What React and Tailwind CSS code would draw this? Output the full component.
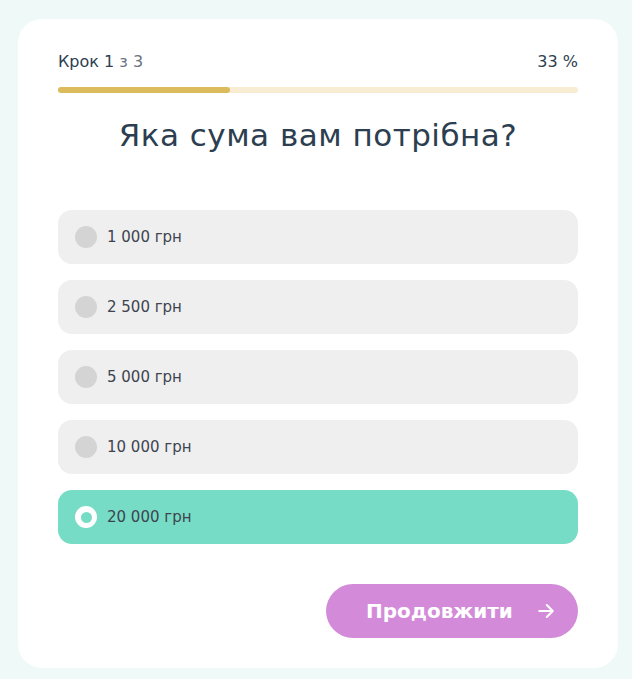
import React from "react";

const options = ["1 000 грн", "2 500 грн", "5 000 грн", "10 000 грн", "20 000 грн"];

export default function App() {
  const selected = 4;
  return (
    <div className="min-h-[679px] w-full bg-[#effaf8] px-[18px] pt-[19px] pb-[11px]" style={{ fontFamily: '"DejaVu Sans", sans-serif' }}>
      <div className="bg-white rounded-[24px] px-[40px] pt-[30px] pb-[30px] w-[600px]">
        <div className="flex justify-between items-center text-[16px] text-[#2c3e50] h-[24px] pt-[1px]">
          <div>
            Крок 1 <span className="text-[#6b7280]">з 3</span>
          </div>
          <div>33 %</div>
        </div>
        <div className="mt-[14px] h-[6px] rounded-full bg-[#f8edd2]">
          <div className="h-full rounded-full bg-[#dbbb5c]" style={{ width: "33%" }} />
        </div>
        <h1 className="mt-[22px] text-center text-[31px] tracking-[0.5px] leading-[40px] text-[#2c3e50]">Яка сума вам потрібна?</h1>
        <div className="mt-[55px] flex flex-col gap-[16px]">
          {options.map((o, i) => (
            <div
              key={o}
              className={`h-[54px] rounded-[14px] flex items-center px-[17px] gap-[10px] ${i === selected ? "bg-[#77dcc5]" : "bg-[#efefef]"}`}
            >
              {i === selected ? (
                <div className="w-[22px] h-[22px] rounded-full bg-white flex items-center justify-center">
                  <div className="w-[11px] h-[11px] rounded-full bg-[#77dcc5]" />
                </div>
              ) : (
                <div className="w-[22px] h-[22px] rounded-full bg-[#d4d4d4]" />
              )}
              <span className="text-[15px] text-[#3d4450]">{o}</span>
            </div>
          ))}
        </div>
        <div className="mt-[40px] flex justify-end">
          <button className="h-[54px] w-[252px] rounded-full bg-[#d38bd9] text-white text-[20px] font-bold flex items-center justify-start pl-[40px] gap-[24px]">
            <span>Продовжити</span>
            <svg width="18" height="18" viewBox="0 0 24 24" fill="none" stroke="white" strokeWidth="2.8" strokeLinecap="round" strokeLinejoin="round">
              <path d="M3 12h18M13 4l8 8-8 8" />
            </svg>
          </button>
        </div>
      </div>
    </div>
  );
}
